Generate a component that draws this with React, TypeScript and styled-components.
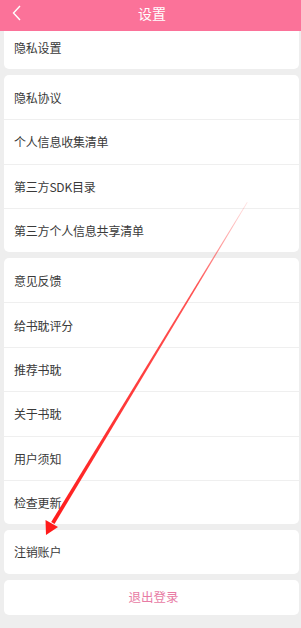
import React from "react";
import styled, { createGlobalStyle } from "styled-components";

const GlobalStyle = createGlobalStyle`
   html, body {
      margin: 0;
      padding: 0;
      background-color: #eeeeee;
   }
   body {
      font-family: "Noto Sans CJK SC", "Noto Sans", sans-serif;
   }
`;

export const Page = styled.div`
   position: relative;
   width: 301px;
   height: 628px;
   overflow: hidden;
   background-color: #eeeeee;
   display: flex;
   flex-direction: column;
`;

export const Header = styled.div`
   position: relative;
   z-index: 2;
   flex: 0 0 31px;
   height: 31px;
   background-color: #fb7299;
   display: flex;
   align-items: center;
   justify-content: center;
`;

export const BackButton = styled.div`
   position: absolute;
   left: 9px;
   top: 3px;
   width: 16px;
   height: 20px;
   display: flex;
   align-items: center;
   justify-content: center;
`;

export const Title = styled.div`
   color: #ffffff;
   font-size: 14px;
   line-height: 14px;
   padding-left: 3px;
   margin-top: -6px;
`;

export const Scroller = styled.div`
   flex: 1;
   overflow: hidden;
`;

export const List = styled.div`
   display: flex;
   flex-direction: column;
   gap: 5.5px;
   margin-top: -6px;
   padding: 0 2px 0 4px;
`;

export const Card = styled.div`
   background-color: white;
   border-radius: 5px;
   display: flex;
   flex-direction: column;
`;

export const Row = styled.div`
   box-sizing: border-box;
   height: 44.4px;
   display: flex;
   align-items: center;
   padding-left: 10px;
   color: #3a3a3a;
   font-size: 12px;
   letter-spacing: -0.2px;
   & + & {
      border-top: 1px solid #efefef;
   }
`;

export const Logout = styled.div`
   height: 37px;
   display: flex;
   align-items: center;
   justify-content: center;
   color: #e87ba4;
   font-size: 12.5px;
   padding-left: 4px;
   margin-top: -2px;
`;

const Overlay = styled.svg`
   position: absolute;
   left: 0;
   top: 0;
   pointer-events: none;
   z-index: 3;
`;

const groups = [
   ["隐私设置"],
   ["隐私协议", "个人信息收集清单", "第三方SDK目录", "第三方个人信息共享清单"],
   ["意见反馈", "给书耽评分", "推荐书耽", "关于书耽", "用户须知", "检查更新"],
   ["注销账户"],
];

const Arrow = () => (
   <Overlay width="301" height="628" viewBox="0 0 301 628">
      <defs>
         <linearGradient id="fade" x1="247" y1="202" x2="46" y2="533" gradientUnits="userSpaceOnUse">
            <stop offset="0" stopColor="#ff3b3b" stopOpacity="0.15" />
            <stop offset="0.25" stopColor="#ff2a2a" stopOpacity="0.8" />
            <stop offset="1" stopColor="#ff1a1a" stopOpacity="1" />
         </linearGradient>
      </defs>
      <polygon points="247,202 247.6,202.4 54.5,524 51.2,522" fill="url(#fade)" />
      <polygon points="46,535 45.5,520 58,527" fill="#ff1a1a" />
   </Overlay>
);

export default function App() {
   return (
      <>
         <GlobalStyle />
         <Page>
            <Header>
               <BackButton>
                  <svg width="10" height="16" viewBox="0 0 10 16">
                     <path d="M8 1 L1.5 8 L8 15" fill="none" stroke="#fff" strokeWidth="1.4" />
                  </svg>
               </BackButton>
               <Title>设置</Title>
            </Header>
            <Scroller>
               <List>
                  {groups.map((items, i) => (
                     <Card key={i}>
                        {items.map((label) => (
                           <Row key={label}>{label}</Row>
                        ))}
                     </Card>
                  ))}
                  <Card>
                     <Logout>退出登录</Logout>
                  </Card>
               </List>
            </Scroller>
            <Arrow />
         </Page>
      </>
   );
}
